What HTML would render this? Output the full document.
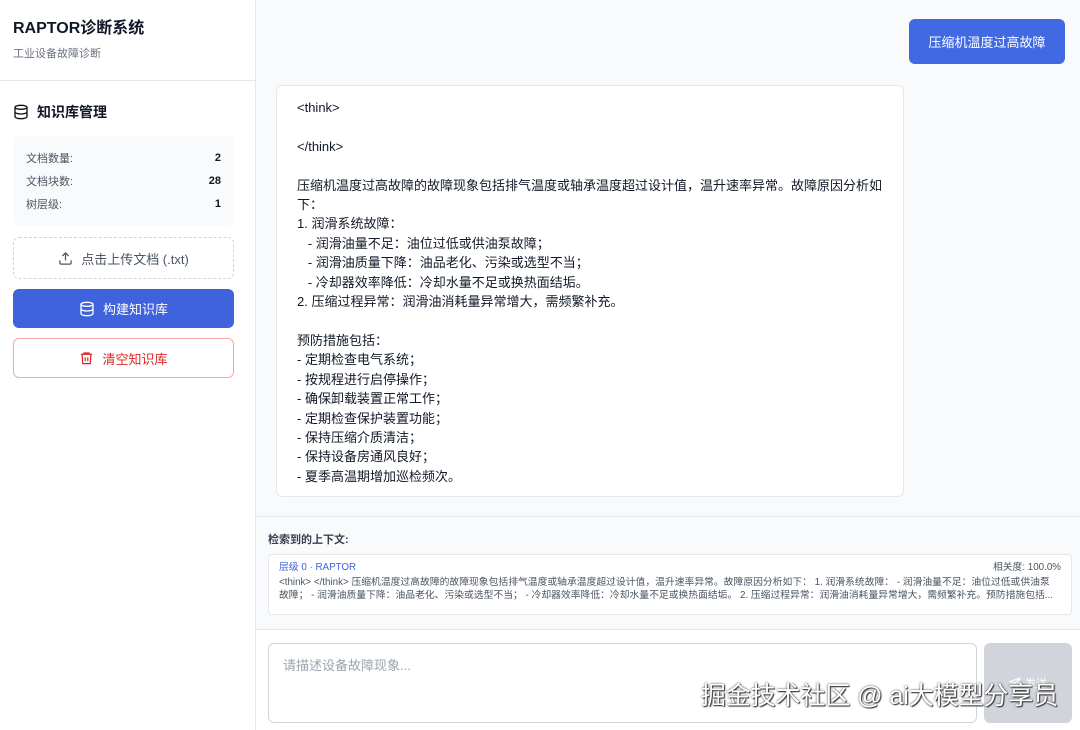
<!DOCTYPE html>
<html><head><meta charset="utf-8"><style>
*{box-sizing:border-box;margin:0;padding:0}
body{width:1080px;height:730px;overflow:hidden;font-family:"Liberation Sans","Noto Sans CJK SC",sans-serif;color:#111827;background:#fff;position:relative}
.side{position:absolute;left:0;top:0;width:256px;height:730px;border-right:1px solid #e5e7eb;background:#fff}
.hd{height:81px;border-bottom:1px solid #e5e7eb;padding:18px 13px}
.hd h1{font-size:16px;font-weight:700;line-height:22px}
.hd p{font-size:11px;color:#6b7280;margin-top:5px}
.kb{padding:0 21px 0 13px}
.kbt{display:flex;align-items:center;gap:8px;margin-top:21px;font-size:14px;font-weight:700}
.stats{margin-top:14px;background:#f9fafb;border-radius:6px;padding:10px 13px;font-size:11px;color:#4b5563}
.stats div{display:flex;justify-content:space-between;height:23px;align-items:center}
.stats b{color:#111827;font-weight:600}
.btn{height:40px;border-radius:6px;display:flex;align-items:center;justify-content:center;gap:8px;font-size:13px;margin-top:10px}
.up{border:1px dashed #d1d5db;color:#4b5563;height:42px;margin-top:12px}
.build{background:#3e63dd;color:#fff;height:39px}
.clr{border:1px solid #fca5a5;color:#dc2626}
.main{position:absolute;left:256px;top:0;width:824px;height:730px;background:#f9fafb}
.ubtn{position:absolute;left:653px;top:19px;width:156px;height:45px;background:#4169e1;color:#fff;border-radius:6px;font-size:13px;display:flex;align-items:center;justify-content:center}
.msg{position:absolute;left:20px;top:85px;width:628px;height:412px;background:#fff;border:1px solid #e5e7eb;border-radius:6px;padding:12px 20px;font-size:13px;line-height:19.4px;white-space:pre;color:#111827}
.ctx{position:absolute;left:0;top:516px;width:824px;height:113px;border-top:1px solid #e5e7eb;background:#f9fafb}
.ctx .lb{position:absolute;left:12px;top:14px;font-size:11px;font-weight:600;color:#374151}
.card{position:absolute;left:12px;top:37px;width:804px;height:61px;background:#fff;border:1px solid #e5e7eb;border-radius:4px;padding:6px 10px;font-size:9.8px;color:#4b5563;line-height:13px}
.card .t{display:flex;justify-content:space-between;margin-bottom:2px}
.card .t span:first-child{color:#3e63dd}
.inp{position:absolute;left:0;top:629px;width:824px;height:101px;background:#fff;border-top:1px solid #e5e7eb}
.ta{position:absolute;left:12px;top:13px;width:709px;height:80px;border:1px solid #d1d5db;border-radius:6px;padding:11px 14px;font-size:13px;color:#9ca3af}
.send{position:absolute;left:728px;top:13px;width:88px;height:80px;background:#d1d5db;border-radius:6px;color:#fff;font-size:11px;display:flex;align-items:center;justify-content:center;gap:4px}
.wm{position:absolute;left:701px;top:676px;font-size:24.9px;color:#fff;text-shadow:0 0 2px #333,1px 1px 1px #333;white-space:nowrap}
</style></head><body>
<div class="side">
<div class="hd"><h1>RAPTOR诊断系统</h1><p>工业设备故障诊断</p></div>
<div class="kb">
<div class="kbt"><svg width="16" height="16" viewBox="0 0 24 24" fill="none" stroke="#111" stroke-width="2"><ellipse cx="12" cy="5" rx="9" ry="3"/><path d="M3 5v14c0 1.7 4 3 9 3s9-1.3 9-3V5M3 12c0 1.7 4 3 9 3s9-1.3 9-3"/></svg>知识库管理</div>
<div class="stats"><div><span>文档数量:</span><b>2</b></div><div><span>文档块数:</span><b>28</b></div><div><span>树层级:</span><b>1</b></div></div>
<div class="btn up"><svg width="15" height="15" viewBox="0 0 24 24" fill="none" stroke="#4b5563" stroke-width="2"><path d="M21 15v4a2 2 0 0 1-2 2H5a2 2 0 0 1-2-2v-4M17 8l-5-5-5 5M12 3v12"/></svg>点击上传文档 (.txt)</div>
<div class="btn build"><svg width="16" height="16" viewBox="0 0 24 24" fill="none" stroke="#fff" stroke-width="2"><ellipse cx="12" cy="5" rx="9" ry="3"/><path d="M3 5v14c0 1.7 4 3 9 3s9-1.3 9-3V5M3 12c0 1.7 4 3 9 3s9-1.3 9-3"/></svg>构建知识库</div>
<div class="btn clr"><svg width="15" height="16" viewBox="0 0 24 24" fill="none" stroke="#dc2626" stroke-width="2"><path d="M3 6h18M8 6V4h8v2M5 6l1 15h12l1-15M10 11v6M14 11v6"/></svg>清空知识库</div>
</div></div>
<div class="main">
<div class="ubtn">压缩机温度过高故障</div>
<div class="msg">&lt;think&gt;

&lt;/think&gt;

压缩机温度过高故障的故障现象包括排气温度或轴承温度超过设计值，温升速率异常。故障原因分析如
下：
1. 润滑系统故障：
   - 润滑油量不足：油位过低或供油泵故障；
   - 润滑油质量下降：油品老化、污染或选型不当；
   - 冷却器效率降低：冷却水量不足或换热面结垢。
2. 压缩过程异常：润滑油消耗量异常增大，需频繁补充。

预防措施包括：
- 定期检查电气系统；
- 按规程进行启停操作；
- 确保卸载装置正常工作；
- 定期检查保护装置功能；
- 保持压缩介质清洁；
- 保持设备房通风良好；
- 夏季高温期增加巡检频次。</div>
<div class="ctx"><div class="lb">检索到的上下文:</div>
<div class="card"><div class="t"><span>层级 0 · RAPTOR</span><span>相关度: 100.0%</span></div>
&lt;think&gt; &lt;/think&gt; 压缩机温度过高故障的故障现象包括排气温度或轴承温度超过设计值，温升速率异常。故障原因分析如下： 1. 润滑系统故障： - 润滑油量不足：油位过低或供油泵<br>故障； - 润滑油质量下降：油品老化、污染或选型不当； - 冷却器效率降低：冷却水量不足或换热面结垢。 2. 压缩过程异常：润滑油消耗量异常增大，需频繁补充。预防措施包括...</div></div>
<div class="inp"><div class="ta">请描述设备故障现象...</div><div class="send"><svg width="12" height="12" viewBox="0 0 24 24" fill="none" stroke="#fff" stroke-width="2"><path d="M22 2L11 13M22 2l-7 20-4-9-9-4z"/></svg>发送</div></div>
</div>
<div class="wm">掘金技术社区 @ ai大模型分享员</div>
</body></html>
